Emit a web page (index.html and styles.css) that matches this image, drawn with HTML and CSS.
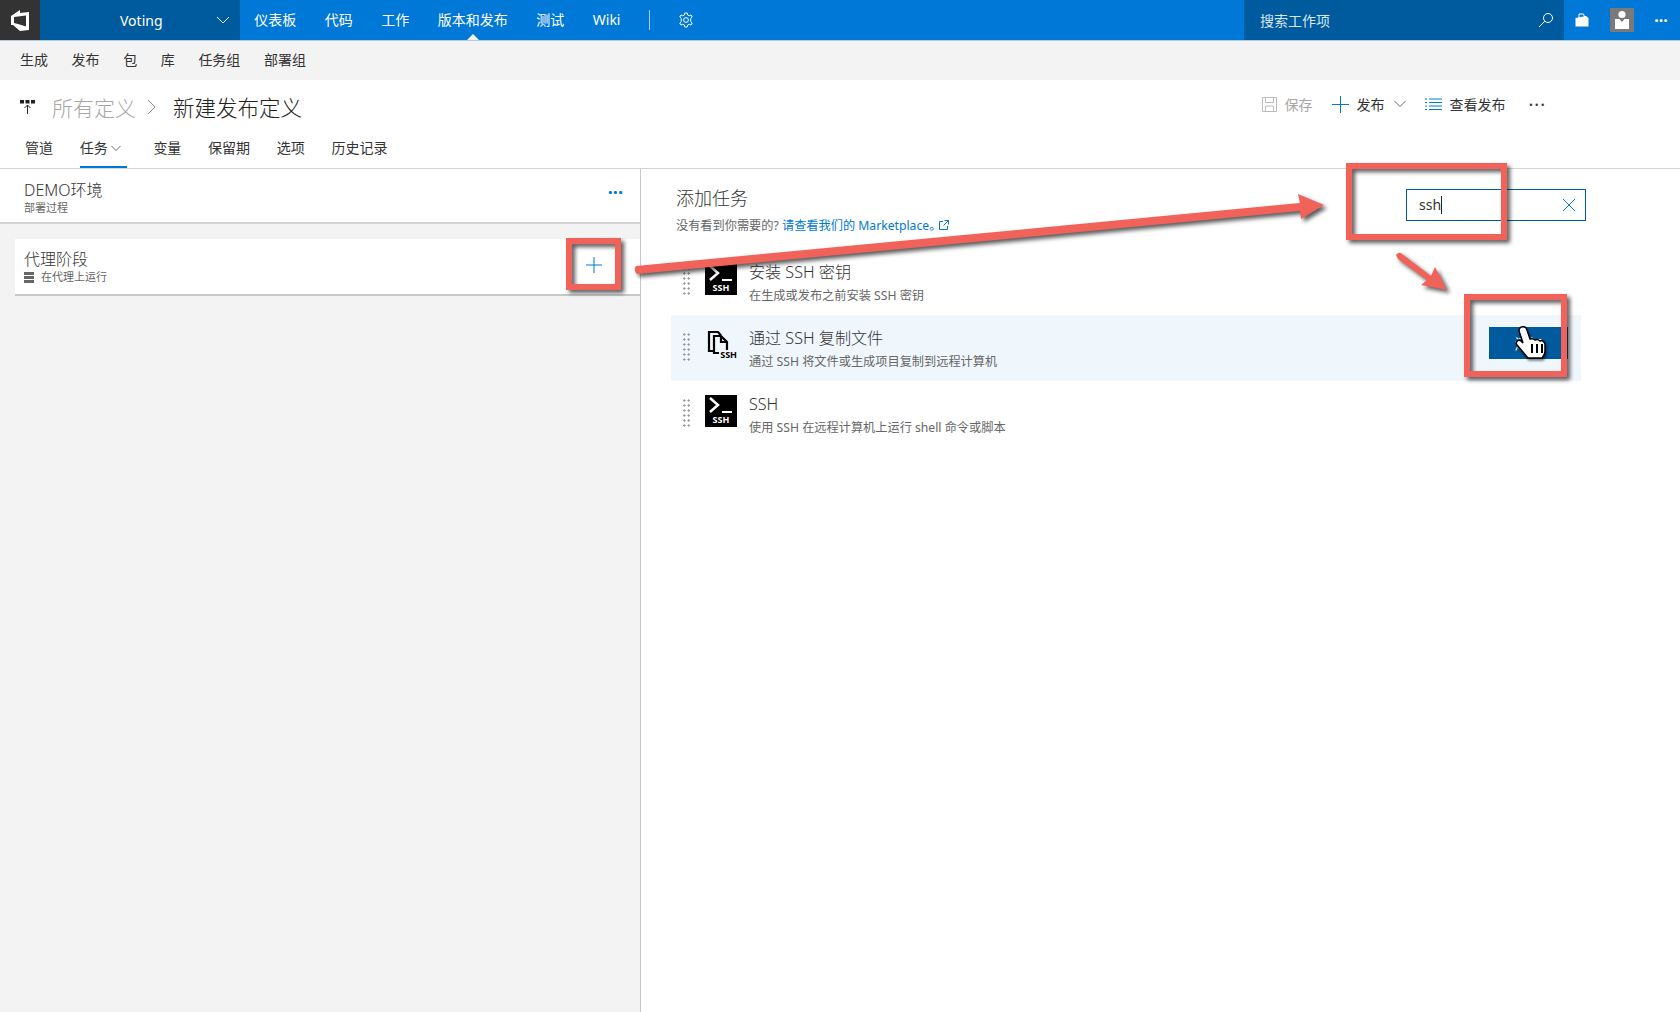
FILE: index.html
```html
<!DOCTYPE html>
<html>
<head>
<meta charset="utf-8">
<title>新建发布定义</title>
<link rel="stylesheet" href="styles.css">
</head>
<body>

<div id="topbar">
	<div class="logo">
		<svg width="24" height="24" viewBox="0 0 24 24"><path fill="#fff" fill-rule="evenodd" d="M3 8 L12 2 V5 L21 4 V22 L12 23 L5 17 H3 Z M6 9 V15 L10 16 L18 18.5 V7.500 L10 8.500 Z"/></svg>
	</div>
	<div class="project">
		<span>Voting</span>
		<svg width="14" height="14" viewBox="0 0 14 14"><path class="line" stroke="#fff" d="M1 4 L7 10 L13 4"/></svg>
	</div>
	<a class="nav">仪表板</a>
	<a class="nav">代码</a>
	<a class="nav">工作</a>
	<a class="nav current">版本和发布</a>
	<a class="nav">测试</a>
	<a class="nav">Wiki</a>
	<div class="divider"></div>
	<svg class="gear" width="16" height="16" viewBox="0 0 16 16"><circle class="line" stroke="#fff" cx="8" cy="8" r="2.4"/><path class="line" stroke="#fff" d="M6.8 1 H9.2 L9.6 3 L11.2 3.8 L13 2.9 L14.2 5 L12.7 6.4 V9.6 L14.2 11 L13 13.1 L11.2 12.2 L9.6 13 L9.2 15 H6.8 L6.4 13 L4.8 12.2 L3 13.1 L1.8 11 L3.3 9.6 V6.4 L1.8 5 L3 2.9 L4.8 3.8 L6.4 3 Z"/></svg>
	<div class="spring"></div>
	<div class="search">
		<span>搜索工作项</span>
		<svg width="16" height="16" viewBox="0 0 16 16"><circle class="line" stroke="#fff" cx="10" cy="6" r="4.5"/><path class="line" stroke="#fff" d="M6.8 9.2 L1 15"/></svg>
	</div>
	<svg class="bag" width="14" height="14" viewBox="0 0 14 14"><path fill="#fff" d="M.5 5 L11 3 L13.500 5 V13.500 H.5 Z"/><path class="line" stroke="#fff" d="M4 5 V1 H8.500 L9.500 4"/></svg>
	<div class="avatar">
		<svg width="24" height="24" viewBox="0 0 24 24"><circle fill="#fff" cx="12" cy="6.5" r="3.6"/><path fill="#fff" d="M5 11 H9.5 L12 14 L14.500 11 H19 V21 H5 Z"/></svg>
	</div>
	<div class="more-white">···</div>
</div>

<div id="subnav">
	<a>生成</a><a>发布</a><a>包</a><a>库</a><a>任务组</a><a>部署组</a>
</div>

<div id="header">
	<div class="crumbs">
		<svg width="15" height="15" viewBox="0 0 15 15"><rect fill="#222" x="0" y="1" width="4" height="3.500"/><rect fill="#222" x="5.500" y="1" width="4" height="3.500"/><rect fill="#222" x="11" y="1" width="4" height="3.500"/><path class="line" stroke="#222" d="M7.500 15 V6 M4.500 9 L7.500 6 L10.500 9"/></svg>
		<span class="parent">所有定义</span>
		<svg class="sep" width="10" height="16" viewBox="0 0 10 16"><path class="line" stroke="#888" d="M1 1 L8 8 L1 15"/></svg>
		<span class="title">新建发布定义</span>
	</div>
	<div class="actions">
		<span class="action off">
			<svg width="15" height="15" viewBox="0 0 15 15"><path class="line" stroke="#bbb" d="M.5 .5 H14.500 V14.500 H.5 Z M3.500 .5 V5.500 H11.500 V.5 M3.500 14.500 V9 H11.500 V14.500"/></svg>
			保存
		</span>
		<span class="action">
			<svg class="plus" width="17" height="17" viewBox="0 0 17 17"><path class="line" stroke="#0078d7" d="M8.500 0 V17 M0 8.500 H17"/></svg>
			发布
			<svg class="chev" width="12" height="12" viewBox="0 0 12 12"><path class="line" stroke="#666" d="M.5 3 L6 8.500 L11.500 3"/></svg>
		</span>
		<span class="action">
			<svg width="17" height="13" viewBox="0 0 17 13"><path class="line" stroke="#0078d7" d="M0 1 H2 M4 1 H17 M0 4.500 H2 M4 4.500 H17 M0 8 H2 M4 8 H17 M0 11.500 H2 M4 11.500 H17"/></svg>
			查看发布
		</span>
		<span class="action dots">···</span>
	</div>
	<div class="tabs">
		<a>管道</a>
		<a class="on">任务 <svg width="10" height="10" viewBox="0 0 10 10"><path class="line" stroke="#666" d="M.5 3 L5 7.500 L9.500 3"/></svg></a>
		<a>变量</a><a>保留期</a><a>选项</a><a>历史记录</a>
	</div>
</div>

<div id="main">
	<div id="left">
		<div class="envhead">
			<div>
				<div class="big">DEMO环境</div>
				<div class="small">部署过程</div>
			</div>
			<div class="more-blue">···</div>
		</div>
		<div class="phase">
			<div>
				<div class="big">代理阶段</div>
				<div class="small agent">
					<svg width="10" height="11" viewBox="0 0 10 11"><path fill="#666" d="M0 0 H10 V3 H0 Z M0 4 H10 V7 H0 Z M0 8 H10 V11 H0 Z"/></svg>
					在代理上运行
				</div>
			</div>
			<svg class="addplus" width="16" height="16" viewBox="0 0 16 16"><path class="line" stroke="#0078d7" d="M8 0 V16 M0 8 H16"/></svg>
		</div>
	</div>

	<div id="right">
		<div class="addhead">
			<div>
				<div class="addtitle">添加任务</div>
				<div class="addsub">没有看到你需要的? <a>请查看我们的 Marketplace。</a>
					<svg width="10" height="10" viewBox="0 0 10 10"><path class="line" stroke="#0078d7" d="M4 1.500 H.5 V9.500 H8.500 V6 M5.500 .5 H9.500 V4.500 M9.500 .5 L4.500 5.500"/></svg>
				</div>
			</div>
			<div class="filter">
				<span class="typed">ssh</span>
				<svg width="14" height="14" viewBox="0 0 14 14"><path class="line" stroke="#0078d7" d="M1 1 L13 13 M13 1 L1 13"/></svg>
			</div>
		</div>

		<div class="task">
			<div class="grip"></div>
			<div class="term">
				<svg width="32" height="20" viewBox="0 0 32 20"><path fill="none" stroke="#fff" stroke-width="2.500" d="M5 3 L13 10 L5 17"/><path stroke="#fff" stroke-width="2" d="M17 17 H27"/></svg>
				<span>SSH</span>
			</div>
			<div>
				<div class="tname">安装 SSH 密钥</div>
				<div class="tdesc">在生成或发布之前安装 SSH 密钥</div>
			</div>
		</div>

		<div class="task hover">
			<div class="grip"></div>
			<div class="copyicon">
				<svg width="24" height="26" viewBox="0 0 24 26"><path fill="none" stroke="#000" stroke-width="2.200" d="M8 22 H4 V3 H13 L16 6.500 M9 7 H16 L22 13 V24 H9 Z M16 7 V13 H22"/></svg>
				<span>SSH</span>
			</div>
			<div>
				<div class="tname">通过 SSH 复制文件</div>
				<div class="tdesc">通过 SSH 将文件或生成项目复制到远程计算机</div>
			</div>
			<button class="addbtn">添加</button>
		</div>

		<div class="task">
			<div class="grip"></div>
			<div class="term">
				<svg width="32" height="20" viewBox="0 0 32 20"><path fill="none" stroke="#fff" stroke-width="2.500" d="M5 3 L13 10 L5 17"/><path stroke="#fff" stroke-width="2" d="M17 17 H27"/></svg>
				<span>SSH</span>
			</div>
			<div>
				<div class="tname">SSH</div>
				<div class="tdesc">使用 SSH 在远程计算机上运行 shell 命令或脚本</div>
			</div>
		</div>
	</div>
</div>

<!-- callouts drawn on top of the screenshot -->
<svg id="marks" width="1680" height="1012" viewBox="0 0 1680 1012">
	<g class="red">
		<rect x="569" y="241" width="49" height="46"/>
		<rect x="1349" y="166" width="155" height="71"/>
		<rect x="1467" y="297" width="97" height="77"/>
		<path class="fillred" d="M636 266 L1300 203 L1298 194 L1324 205 L1301 219 L1300 211 L637 274 Q633 270 636 266 Z"/>
		<path class="fillred" d="M1396 255 Q1399 251 1402 254 L1431 276 L1435 267 L1447 290 L1421 285 L1427 280 L1398 259 Z"/>
	</g>
	<g class="cursor">
		<path class="hand" d="M1519 331 c0 -5 7 -6 8 -1 l3 9 c3 -1 4 0 5 1 c2 -1 4 0 5 1 c2 -1 4 0 5 3 l0 7 c0 3 -1 5 -3 7 h-14 l-11 -13 c-2 -3 1 -6 4 -4 l2 2 z"/>
		<path class="fingers" d="M1532 344 v9 M1537 344 v9 M1542 344 v9"/>
	</g>
</svg>

</body>
</html>
```

FILE: styles.css
```css
* {
	box-sizing: border-box;
}

body {
	margin: 0;
	width: 1680px;
	height: 1012px;
	overflow: hidden;
	position: relative;
	font-family: "Noto Sans", "Noto Sans CJK SC", sans-serif;
	font-size: 14px;
	color: #333;
	background: #fff;
}

.line {
	fill: none;
	stroke-width: 1;
}

/* top bar */
#topbar {
	display: flex;
	align-items: center;
	height: 41px;
	background: #0078d7;
	border-bottom: 1px solid #a9cdeb;
	color: #fff;
}

.logo {
	width: 40px;
	height: 40px;
	background: #333;
	display: flex;
	align-items: center;
	justify-content: center;
}

.project {
	width: 200px;
	height: 40px;
	background: #005a9e;
	display: flex;
	align-items: center;
	justify-content: space-between;
	padding: 0 10px 0 80px;
}

.nav {
	padding: 0 14.25px;
	line-height: 40px;
	position: relative;
}

.nav.current::after {
	content: "";
	position: absolute;
	left: 50%;
	bottom: 0;
	margin-left: -6px;
	border: 6px solid transparent;
	border-top: 0;
	border-bottom-color: #f3f3f3;
}

.divider {
	width: 1px;
	height: 20px;
	background: #a9cdeb;
	margin: 0 28px 0 14px;
}

.spring {
	flex: 1;
}

.search {
	width: 320px;
	height: 40px;
	background: #005a9e;
	display: flex;
	align-items: center;
	justify-content: space-between;
	padding: 0 10px 0 16px;
	color: #d6e6f4;
}

.bag {
	margin: 0 21px 0 11px;
}

.avatar {
	width: 24px;
	height: 24px;
	background: #7a7a7a;
}

.more-white {
	width: 46px;
	padding-left: 8px;
	text-align: center;
	font-weight: bold;
	font-size: 16px;
}

/* hub bar */
#subnav {
	display: flex;
	gap: 23.6px;
	height: 39px;
	padding: 0 0 4px 20px;
	align-items: center;
	background: #f3f3f3;
}

/* page header */
#header {
	height: 89px;
	border-bottom: 1px solid #d4d4d4;
	display: grid;
	grid-template-columns: 1fr auto;
	grid-template-rows: 56px 1fr;
}

.crumbs {
	display: flex;
	align-items: center;
	padding: 0 0 3px 20px;
	font-size: 21px;
	font-weight: 300;
}

.parent {
	color: #a6a6a6;
	margin-left: 17px;
}

.sep {
	margin: 0 16px 0 11px;
}

.title {
	color: #222;
	font-size: 21.5px;
}

.actions {
	display: flex;
	align-items: center;
	padding: 0 134px 8px 0;
	gap: 19px;
}

.action {
	display: flex;
	align-items: center;
	gap: 8px;
	color: #333;
}

.action.off {
	color: #a6a6a6;
}

.chev {
	margin-left: 1px;
}

.dots {
	font-size: 18px;
	letter-spacing: 1px;
	margin-left: 4px;
}

.tabs {
	grid-column: 1 / 3;
	display: flex;
	gap: 26.7px;
	padding-left: 25px;
}

.tabs a {
	height: 32px;
	line-height: 24px;
	display: block;
}

.tabs a.on {
	border-bottom: 2px solid #0078d7;
	width: 47px;
	white-space: nowrap;
}

/* panes */
#main {
	display: flex;
	height: 844px;
}

#left {
	width: 641px;
	background: #f3f3f3;
	border-right: 1px solid #c8c8c8;
}

.envhead {
	height: 55px;
	background: #fff;
	border-bottom: 2px solid #d4d4d4;
	padding: 9px 17px 0 24px;
	display: flex;
	justify-content: space-between;
	align-items: flex-start;
}

.big {
	font-size: 16px;
	line-height: 24px;
	font-weight: 300;
}

.envhead .small {
	margin-top: -1px;
}

.small {
	font-size: 11px;
	line-height: 14px;
	color: #666;
}

.more-blue {
	color: #0078d7;
	font-weight: bold;
	font-size: 18px;
	line-height: 28px;
}

.phase {
	height: 57px;
	margin: 15px 0 0 15px;
	background: #fff;
	border-bottom: 2px solid #c8c8c8;
	padding: 8px 38px 0 9px;
	display: flex;
	justify-content: space-between;
	align-items: flex-start;
}

.agent {
	display: flex;
	align-items: center;
	gap: 7px;
	margin-top: -1px;
}

.addplus {
	margin-top: 10px;
}

#right {
	flex: 1;
	padding: 0 99px 0 30px;
}

.addhead {
	height: 80px;
	padding: 15px 0 0 5px;
	display: flex;
	justify-content: space-between;
	align-items: flex-start;
}

.addtitle {
	font-size: 18px;
	line-height: 28px;
	font-weight: 300;
}

.addsub {
	font-size: 12.2px;
	line-height: 20px;
	margin-top: 4px;
	color: #666;
}

.addsub a {
	color: #0078d7;
}

.addsub svg {
	margin-left: -6px;
}

.filter {
	width: 180px;
	height: 32px;
	border: 1px solid #005a9e;
	margin: 5px -5px 0 0;
	padding: 0 9px 0 12px;
	display: flex;
	align-items: center;
	justify-content: space-between;
}

.typed {
	border-right: 1px solid #222;
	line-height: 18px;
}

.task {
	height: 66px;
	display: flex;
	align-items: flex-start;
	padding: 14px 0 0 11px;
	position: relative;
}

.task.hover {
	background: #eff6fc;
}

.grip {
	width: 9px;
	height: 30px;
	margin: 3px 14px 0 0;
	background-image: radial-gradient(#9a9a9a 1px, transparent 1.2px);
	background-size: 4.5px 5px;
}

.term {
	width: 32px;
	height: 32px;
	background: #000;
	color: #fff;
	display: flex;
	flex-direction: column;
	align-items: center;
	margin-right: 12px;
}

.term svg {
	display: block;
}

.term span,
.copyicon span {
	font-size: 9px;
	line-height: 10px;
	font-weight: bold;
}

.copyicon {
	width: 32px;
	height: 32px;
	margin-right: 12px;
	position: relative;
}

.copyicon svg {
	display: block;
}

.copyicon span {
	position: absolute;
	right: 0;
	bottom: 1px;
	padding-left: 1px;
	color: #000;
	background: #eff6fc;
}

.tname {
	font-size: 16.1px;
	line-height: 20px;
	margin-top: -1px;
	font-weight: 300;
}

.tdesc {
	font-size: 12.2px;
	line-height: 18px;
	margin-top: 5px;
	color: #666;
}

.addbtn {
	position: absolute;
	left: 818px;
	top: 12px;
	width: 79px;
	height: 32px;
	border: 0;
	background: #005a9e;
	color: #fff;
	font: inherit;
}

/* callouts */
#marks {
	position: absolute;
	left: 0;
	top: 0;
}

.red {
	filter: drop-shadow(3px 3px 2px rgba(0, 0, 0, .65));
}

.red rect {
	fill: none;
	stroke: #f0625a;
	stroke-width: 6;
}

.fillred {
	fill: #f0625a;
}

.cursor {
	filter: drop-shadow(1px 2px 1px rgba(0, 0, 0, .5));
}

.hand {
	fill: #fff;
	stroke: #000;
	stroke-width: 1.5;
}

.fingers {
	fill: none;
	stroke: #000;
	stroke-width: 2;
}
```
